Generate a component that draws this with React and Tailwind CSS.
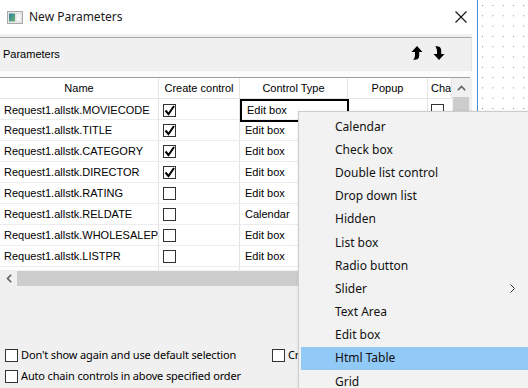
import React from 'react';

const rows = [
  { name: 'Request1.allstk.MOVIECODE', create: true, type: 'Edit box', focus: true },
  { name: 'Request1.allstk.TITLE', create: true, type: 'Edit box' },
  { name: 'Request1.allstk.CATEGORY', create: true, type: 'Edit box' },
  { name: 'Request1.allstk.DIRECTOR', create: true, type: 'Edit box' },
  { name: 'Request1.allstk.RATING', create: false, type: 'Edit box' },
  { name: 'Request1.allstk.RELDATE', create: false, type: 'Calendar' },
  { name: 'Request1.allstk.WHOLESALEPRICE', create: false, type: 'Edit box' },
  { name: 'Request1.allstk.LISTPR', create: false, type: 'Edit box' },
  { name: '', create: null, type: '' },
];

const menuItems = [
  'Calendar',
  'Check box',
  'Double list control',
  'Drop down list',
  'Hidden',
  'List box',
  'Radio button',
  'Slider',
  'Text Area',
  'Edit box',
  'Html Table',
  'Grid',
];

const Box = ({ checked }) => (
  <div className="w-[13px] h-[13px] shrink-0 border border-[#333] bg-white flex items-center justify-center">
    {checked && (
      <svg width="11" height="11" viewBox="0 0 11 11">
        <polyline points="1.5,5.5 4.5,9 10,1" fill="none" stroke="#000" strokeWidth="2" />
      </svg>
    )}
  </div>
);

const WinIcon = () => (
  <svg width="16" height="13" viewBox="0 0 16 13">
    <defs>
      <linearGradient id="g" x1="0" y1="0" x2="1" y2="1">
        <stop offset="0" stopColor="#2f7fa8" />
        <stop offset="1" stopColor="#6cb36a" />
      </linearGradient>
    </defs>
    <rect x="0.5" y="0.5" width="15" height="12" fill="#e9e9e9" stroke="#a8a8a8" />
    <rect x="2" y="2.5" width="6" height="8" fill="url(#g)" />
    <rect x="9" y="2.5" width="5" height="8" fill="#f7f7f7" stroke="#d0d0d0" strokeWidth="0.5" />
  </svg>
);

const UpArrow = () => (
  <svg width="12" height="14" viewBox="0 0 12 14">
    <path d="M6 0 L11.5 6 L8.2 6 L8.2 9.5 Q8.2 13.8 3.5 13.8 L2.2 13.8 Q4 12 4 9 L4 6 L0.5 6 Z" fill="#000" />
  </svg>
);

const DownArrow = () => (
  <svg width="12" height="14" viewBox="0 0 12 14">
    <path d="M6 14 L11.5 8 L8.2 8 L8.2 4.5 Q8.2 0.2 3.5 0.2 L2.2 0.2 Q4 2 4 5 L4 8 L0.5 8 Z" fill="#000" />
  </svg>
);

export default function App() {
  return (
    <div className="relative flex w-[528px] h-[388px] overflow-hidden bg-white font-['Liberation_Sans',sans-serif] text-[11px] text-black">
      {/* dialog */}
      <div className="w-[477px] flex flex-col bg-white">
        <div className="h-[34px] flex items-center pl-[7px] pr-[10px] shrink-0">
          <WinIcon />
          <span className="ml-[6px] font-['Noto_Sans',sans-serif] text-[12px] text-[#1a1a1a]">New Parameters</span>
          <svg className="ml-auto" width="12" height="12" viewBox="0 0 12 12">
            <path d="M0.5 0.5 L11.5 11.5 M11.5 0.5 L0.5 11.5" stroke="#111" strokeWidth="1.1" />
          </svg>
        </div>
        <div className="w-[472px] flex-1 flex flex-col bg-[#f0f0f0] pt-[3px]">
          {/* toolbar */}
          <div className="h-[34px] shrink-0 flex items-center border-t border-[#a9a9a9] border-r border-r-[#e3e3e3] pl-[3px] pr-[26px]">
            <span>Parameters</span>
            <div className="ml-auto flex items-center gap-[10px] -mt-[4px]">
              <UpArrow />
              <DownArrow />
            </div>
          </div>
          <div className="h-[6px] shrink-0 bg-[#fbfbfb]" />
          {/* table */}
          <div className="w-[470px] shrink-0 flex border-t border-[#a0a0a0] bg-white">
            <div className="w-[452px] flex flex-col">
              <div className="grid grid-cols-[159px_81px_108px_80px_24px] h-[21px] border-b border-[#e5e5e5]">
                {['Name', 'Create control', 'Control Type', 'Popup', 'Cha'].map((h, i) => (
                  <div
                    key={h}
                    className={`flex items-center overflow-hidden whitespace-nowrap border-r border-[#e5e5e5] ${i === 4 ? 'pl-[3px]' : 'justify-center'}`}
                  >
                    {h}
                  </div>
                ))}
              </div>
              <div className="h-[171px] overflow-hidden">
                {rows.map((r, i) => (
                  <div key={i} className="grid grid-cols-[159px_81px_108px_80px_24px] h-[21px] border-b border-[#ececec]">
                    <div className="flex items-center pl-[4px] overflow-hidden whitespace-nowrap border-r border-[#e3e3e3]">
                      {r.name}
                    </div>
                    <div className="flex items-center pl-[4px] border-r border-[#e3e3e3]">
                      {r.create !== null && <Box checked={r.create} />}
                    </div>
                    <div
                      className={`flex items-center pl-[5px] ${r.focus ? 'border-2 border-black -mr-px h-[23px]' : 'border-r border-[#e3e3e3]'}`}
                    >
                      {r.type}
                    </div>
                    <div className="border-r border-[#e3e3e3]" />
                    <div className="flex items-center pl-[3px]">
                      {r.create !== null && <Box checked={false} />}
                    </div>
                  </div>
                ))}
              </div>
            </div>
            <div className="w-[18px] flex flex-col bg-[#f0f0f0]">
              <div className="h-[19px] flex items-center justify-center">
                <svg width="9" height="6" viewBox="0 0 9 6">
                  <polyline points="0.8,5.2 4.5,1.5 8.2,5.2" fill="none" stroke="#606060" strokeWidth="1.6" />
                </svg>
              </div>
              <div className="flex-1 mx-[1px] bg-[#cdcdcd]" />
            </div>
          </div>
          {/* horizontal scrollbar */}
          <div className="w-[470px] h-[17px] shrink-0 flex bg-[#f0f0f0]">
            <div className="w-[17px] flex items-center justify-center">
              <svg width="6" height="9" viewBox="0 0 6 9">
                <polyline points="5.2,0.8 1.5,4.5 5.2,8.2" fill="none" stroke="#606060" strokeWidth="1.6" />
              </svg>
            </div>
            <div className="flex-1 my-[1px] bg-[#cdcdcd]" />
          </div>
          {/* options */}
          <div className="flex-1 flex flex-col justify-end pb-[4px] pl-[5px] gap-[5px] font-['Noto_Sans',sans-serif] text-[11px] tracking-[-0.15px] leading-[16px]">
            <div className="flex items-center">
              <div className="flex items-center gap-[3px] w-[267px]">
                <Box checked={false} />
                <span>Don't show again and use default selection</span>
              </div>
              <div className="flex items-center gap-[3px]">
                <Box checked={false} />
                <span>Create</span>
              </div>
            </div>
            <div className="flex items-center gap-[3px]">
              <Box checked={false} />
              <span>Auto chain controls in above specified order</span>
            </div>
          </div>
        </div>
      </div>
      <div className="w-px bg-[#4a8fd6]" />
      {/* designer canvas */}
      <div className="flex-1 relative">
        <svg width="100%" height="100%" className="block">
          <defs>
            <pattern id="dots" x="4" y="5" width="10.3" height="10.3" patternUnits="userSpaceOnUse">
              <rect width="1" height="1" fill="#8c8c8c" />
            </pattern>
          </defs>
          <rect width="100%" height="100%" fill="url(#dots)" />
        </svg>
      </div>

      {/* context menu */}
      <div className="absolute left-[298px] top-[111px] w-[240px] h-[290px] bg-[#f2f2f2] border border-[#cccccc] shadow-[2px_2px_4px_rgba(0,0,0,0.25)] pt-[3px] px-[2px] font-['Noto_Sans',sans-serif] text-[12px] text-[#111]">
        {menuItems.map((m) => (
          <div
            key={m}
            className={`h-[23.2px] flex items-center pl-[34px] pr-[20px] ${m === 'Html Table' ? 'bg-[#91c9f7]' : ''}`}
          >
            <span>{m}</span>
            {m === 'Slider' && (
              <svg className="ml-auto" width="5" height="9" viewBox="0 0 5 9">
                <polyline points="0.5,0.5 4.5,4.5 0.5,8.5" fill="none" stroke="#333" strokeWidth="1" />
              </svg>
            )}
          </div>
        ))}
      </div>
    </div>
  );
}
